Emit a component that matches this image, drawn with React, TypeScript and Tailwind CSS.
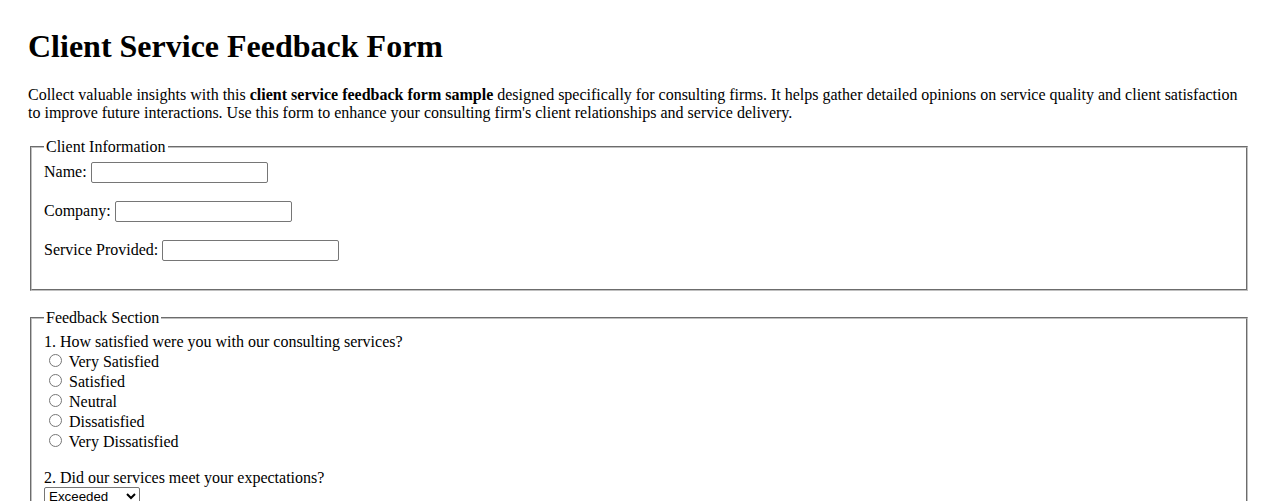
import React from 'react';

const textInput =
  'w-[177px] h-[21px] border border-[#767676] rounded-[2px] px-[2px] py-[1px] bg-white align-baseline text-[13.33px] font-["Liberation_Sans",Arial,sans-serif]';

const radio = 'mt-[3px] mr-[3px] ml-[5px] mb-0 w-[13px] h-[13px] align-baseline';

const satisfaction = ['Very Satisfied', 'Satisfied', 'Neutral', 'Dissatisfied', 'Very Dissatisfied'];

export default function App() {
  return (
    <div className="min-h-screen bg-white text-black px-[28px] pt-[28px] font-['Liberation_Serif','Times_New_Roman',serif] text-[16px] leading-[normal]">
      <h1 className="text-[32px] font-bold leading-[normal] mb-[21.44px]">Client Service Feedback Form</h1>
      <p className="mb-4">
        Collect valuable insights with this <strong className="font-bold">client service feedback form sample</strong>{' '}
        designed specifically for consulting firms. It helps gather detailed opinions on service quality and client
        satisfaction to improve future interactions. Use this form to enhance your consulting firm's client
        relationships and service delivery.
      </p>

      <form>
        <fieldset className="mx-[2px] border-2 border-[#c0c0c0] [border-style:groove] px-[12px] pt-[5.6px] pb-[10px]">
          <legend className="px-[2px]">Client Information</legend>
          <label htmlFor="name">Name: </label>
          <input id="name" type="text" className={textInput} />
          <br />
          <br />
          <label htmlFor="company">Company: </label>
          <input id="company" type="text" className={textInput} />
          <br />
          <br />
          <label htmlFor="service">Service Provided: </label>
          <input id="service" type="text" className={textInput} />
          <br />
          <br />
        </fieldset>

        <br />

        <fieldset className="mx-[2px] border-2 border-[#c0c0c0] [border-style:groove] px-[12px] pt-[5.6px] pb-[10px]">
          <legend className="px-[2px]">Feedback Section</legend>
          <label>1. How satisfied were you with our consulting services?</label>
          <br />
          {satisfaction.map((s) => (
            <React.Fragment key={s}>
              <input type="radio" name="satisfaction" value={s} className={radio} />
              <label> {s}</label>
              <br />
            </React.Fragment>
          ))}
          <br />
          <label htmlFor="expectations">2. Did our services meet your expectations?</label>
          <br />
          <select
            id="expectations"
            className="w-[96px] h-[19px] border border-[#767676] rounded-[2px] bg-white text-[13.33px] font-['Liberation_Sans',Arial,sans-serif]"
          >
            <option>Exceeded</option>
            <option>Met</option>
            <option>Did Not Meet</option>
          </select>
          <br />
          <br />
        </fieldset>
      </form>
    </div>
  );
}
